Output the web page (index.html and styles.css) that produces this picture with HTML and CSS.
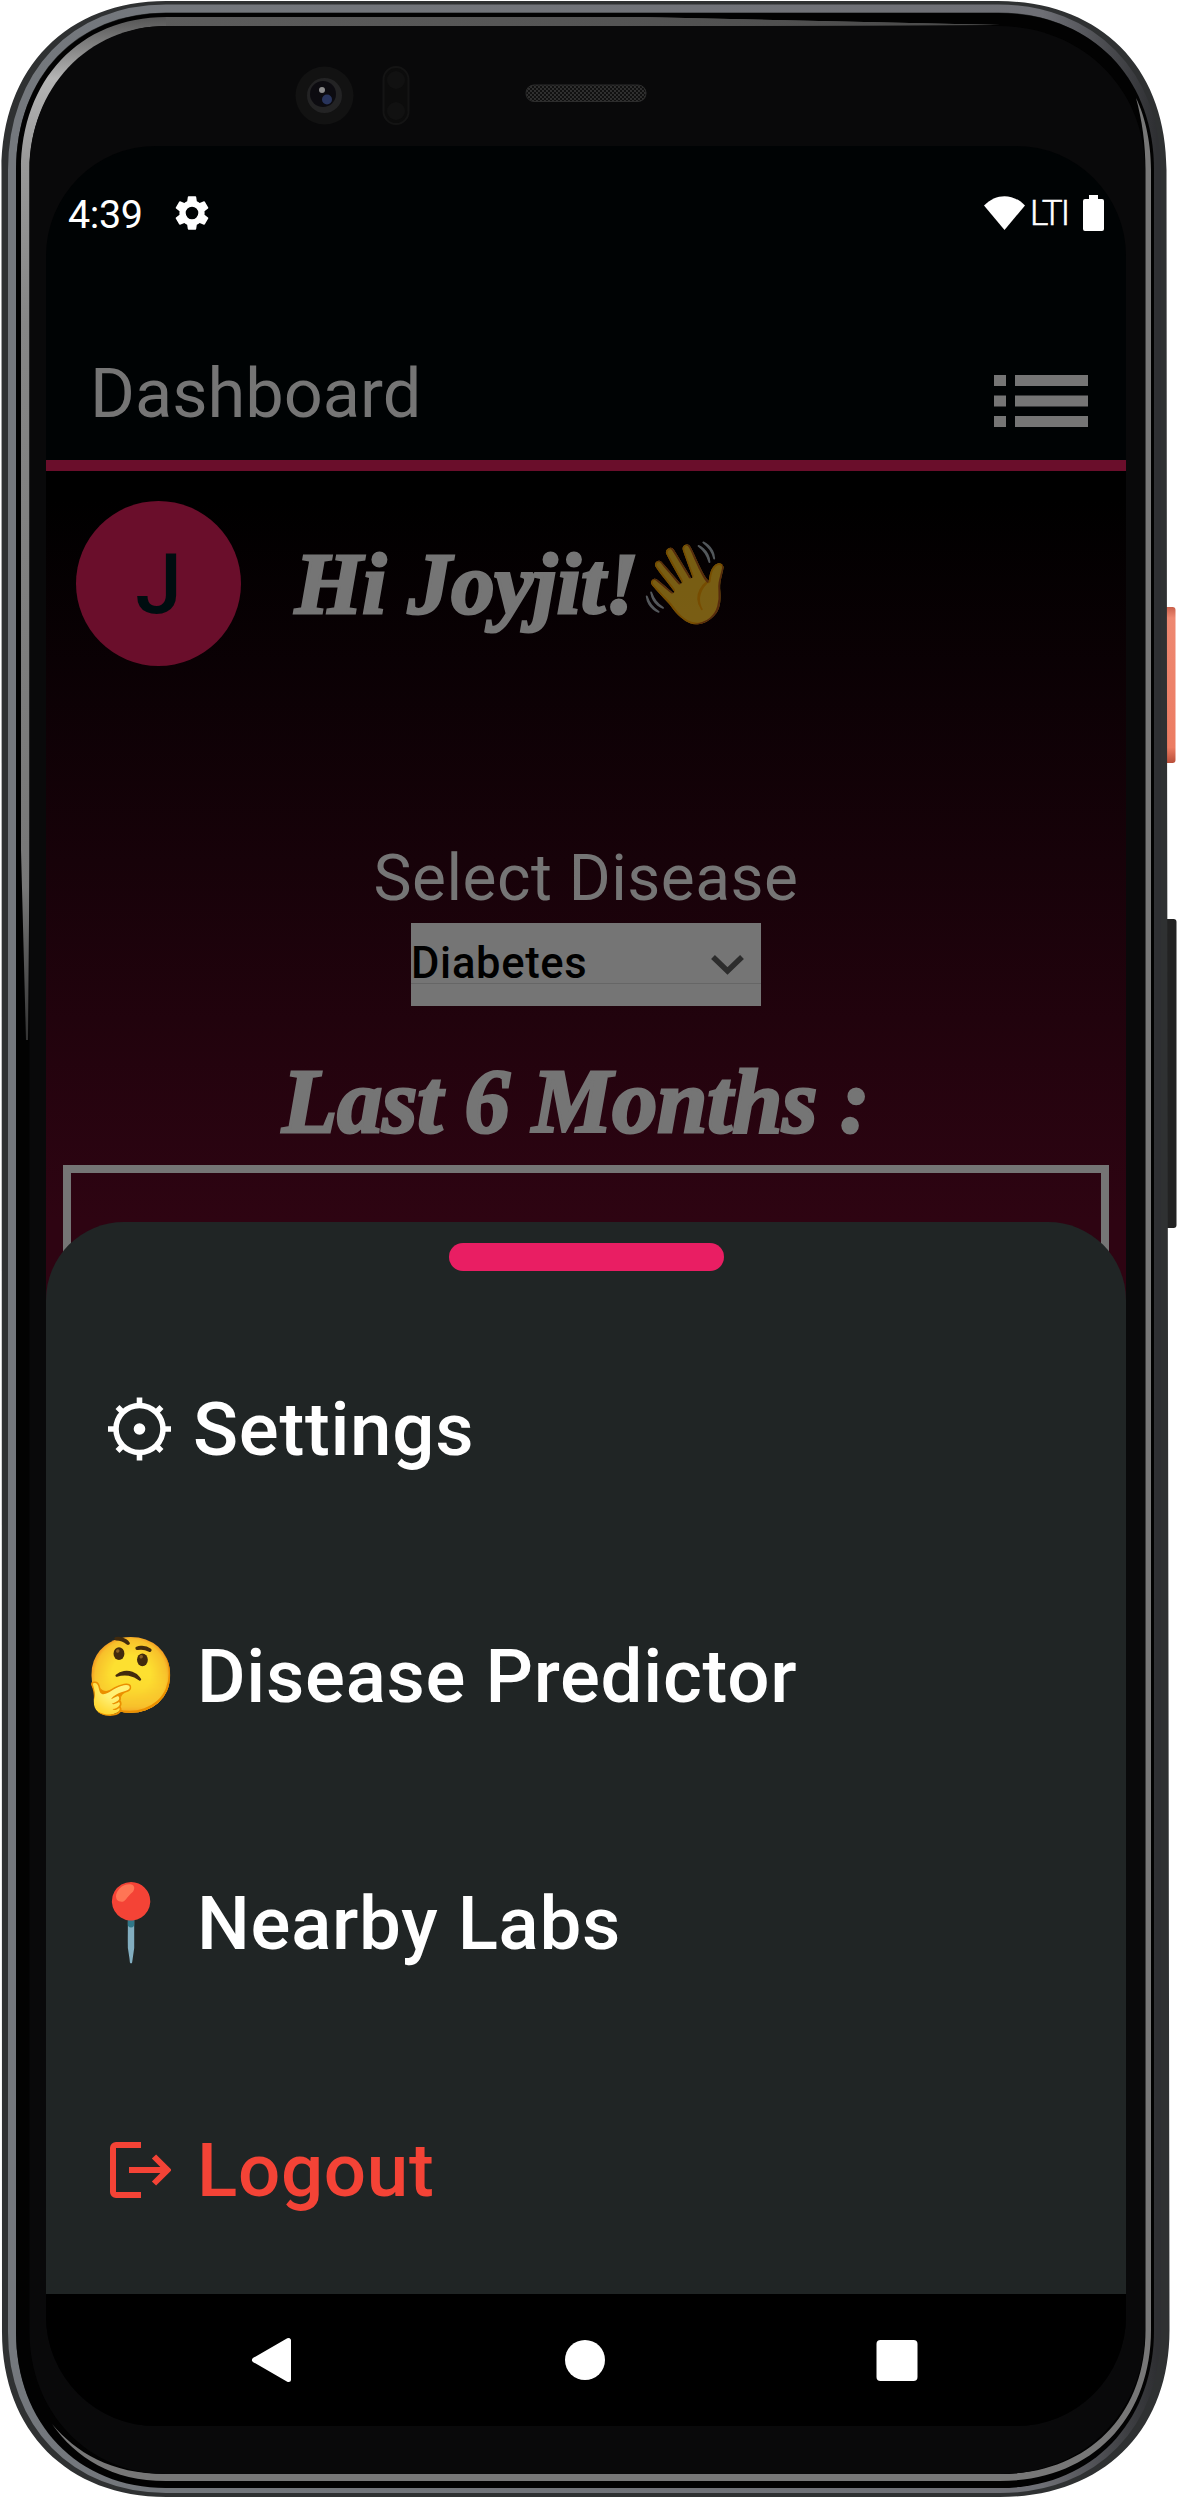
FILE: index.html
```html
<!DOCTYPE html>
<html lang="en">
<head>
<meta charset="utf-8">
<title>Dashboard</title>
<link rel="stylesheet" href="styles.css">
</head>
<body>
<div class="phone">
  <svg class="frame" viewBox="0 0 1178 2498" aria-hidden="true">
    <defs>
      <linearGradient id="rim" x1="0" y1="0" x2="1" y2="0">
        <stop offset="0" stop-color="#74787d"/><stop offset=".9" stop-color="#6e6f75"/><stop offset="1" stop-color="#2e2f32"/>
      </linearGradient>
      <linearGradient id="shineL" x1="0" y1="0" x2="0" y2="1">
        <stop offset="0" stop-color="#555"/><stop offset=".06" stop-color="#b4b4b4"/><stop offset=".14" stop-color="#999"/><stop offset=".3" stop-color="#868686"/><stop offset=".85" stop-color="#777"/><stop offset="1" stop-color="#333"/>
      </linearGradient>
      <linearGradient id="shineT" gradientUnits="userSpaceOnUse" x1="150" y1="0" x2="1000" y2="0">
        <stop offset="0" stop-color="#5c5c5c"/><stop offset=".55" stop-color="#545454"/><stop offset="1" stop-color="#4a4a4a"/>
      </linearGradient>
      <linearGradient id="power" x1="0" y1="0" x2="0" y2="1">
        <stop offset="0" stop-color="#c9604b"/><stop offset=".07" stop-color="#ee8871"/><stop offset=".9" stop-color="#ec7c62"/><stop offset="1" stop-color="#b94f3a"/>
      </linearGradient>
      <pattern id="mesh" width="4" height="4" patternUnits="userSpaceOnUse">
        <rect width="4" height="4" fill="#101010"/><circle cx="1" cy="1" r=".9" fill="#3d3d3d"/><circle cx="3" cy="3" r=".9" fill="#3d3d3d"/>
      </pattern>
    </defs>
    <rect x="1160" y="607" width="15.500" height="156" rx="3" fill="url(#power)"/>
    <rect x="1160" y="919" width="16.500" height="309" rx="3" fill="#222"/>
    <path d="M166 1H998C1100 1 1166.500 67 1166.500 170L1167 700L1169.500 2330C1169.500 2432 1102 2497 1000 2497H166C68 2497 2 2431 2 2332L1.500 170C1.500 67 68 1 166 1Z" fill="#2f3132"/>
    <path d="M166 8.500H998C1092 8.500 1157 74 1157 170V2330C1157 2424 1096 2489 1000 2489H166C74 2489 12 2424 12 2332V170C12 74 74 8.500 166 8.500Z" fill="none" stroke="url(#rim)" stroke-width="8"/>
    <path d="M166 13H998C1090 13 1154 76 1154 170V2330C1154 2422 1092 2488 1000 2488H166C78 2488 16 2424 16 2332V170C16 76 78 13 166 13Z" fill="#020202"/>
    <path d="M21 850V170C21 80 80 17 166 17H640L1000 25L640 26H166C92 26 29.500 88 29.500 170V860L28 1040L26 1040Z" fill="url(#shineL)"/>
    <path d="M166 17H640L1000 25L640 26H166Z" fill="url(#shineT)"/>
    <path d="M1145.500 170V2330C1145.500 2415 1088 2474 1000 2474H166C110 2474 76 2452 52 2424C76 2458 112 2481 166 2481H1000C1092 2481 1151 2418 1151 2330V170C1151 140 1144 114 1136 98C1142 120 1145.500 144 1145.500 170Z" fill="#777"/>
    <path d="M166 26H998C1082 26 1145 88 1145 170V2330C1145 2412 1084 2474 1000 2474H166C88 2474 29.500 2412 29.500 2332V170C29.500 88 88 26 166 26Z" fill="#09090a"/>
    <circle cx="324.500" cy="95.500" r="29" fill="#121212"/>
    <circle cx="324.500" cy="95.500" r="17.500" fill="#232324"/>
    <circle cx="323" cy="94" r="13" fill="#0c0b10"/>
    <circle cx="327" cy="99.500" r="5" fill="#28345c"/>
    <circle cx="322" cy="90" r="3" fill="#8c8c8c"/>
    <rect x="383.500" y="67" width="25" height="57" rx="12.500" fill="#0c0c0c" stroke="#141414" stroke-width="2"/>
    <circle cx="396" cy="80" r="9" fill="#111"/><circle cx="396" cy="111" r="9" fill="#111"/>
    <rect x="526" y="85" width="120" height="16.500" rx="8" fill="url(#mesh)" stroke="#2c2c2c"/>
  </svg>

  <div class="screen">
    <header class="status">
      <span class="clock">4:39</span>
      <svg class="gear" viewBox="0 0 24 24"><path fill="#fff" d="M19.140 12.940c.04-.3.06-.61.06-.94 0-.32-.02-.64-.07-.94l2.030-1.580a.49.49 0 0 0 .12-.61l-1.920-3.320a.49.49 0 0 0-.59-.22l-2.390.96a7 7 0 0 0-1.620-.94L14.400 2.810A.48.48 0 0 0 13.920 2.400h-3.840a.47.47 0 0 0-.47.41l-.36 2.540a7.400 7.400 0 0 0-1.620.94l-2.390-.96a.48.48 0 0 0-.59.22L2.740 8.870a.47.47 0 0 0 .12.61l2.030 1.580a6 6 0 0 0-.02 1.880l-2.030 1.580a.49.49 0 0 0-.12.61l1.920 3.320c.12.22.37.29.59.22l2.390-.96c.5.38 1.030.7 1.620.94l.36 2.540c.05.24.24.41.48.41h3.840c.24 0 .44-.17.47-.41l.36-2.540a7 7 0 0 0 1.620-.94l2.390.96c.22.08.47 0 .59-.22l1.920-3.320a.47.47 0 0 0-.12-.61zM12 15.600a3.600 3.600 0 1 1 0-7.200 3.600 3.600 0 0 1 0 7.200z"/></svg>
      <svg class="wifi" viewBox="0 0 41 34"><path fill="#fff" d="M20.500 34L0 9.500C12-3 29-3 41 9.500Z"/></svg>
      <span class="network">LTI</span>
      <svg class="battery" viewBox="0 0 21 36"><path fill="#fff" d="M6 0h9v4h4a2 2 0 0 1 2 2v28a2 2 0 0 1-2 2H2a2 2 0 0 1-2-2V6a2 2 0 0 1 2-2h4z"/></svg>
    </header>

    <div class="appbar">
      <h1 class="title">Dashboard</h1>
      <svg class="menu" viewBox="0 0 94 52"><path fill="#757575" d="M0 0h12v11H0zM21 0h73v11H21zM0 20.500h12v11H0zM21 20.500h73v11H21zM0 41h12v11H0zM21 41h73v11H21z"/></svg>
    </div>

    <main class="content">
      <div class="greeting">
        <div class="avatar">J</div>
        <div class="hello">Hi Joyjit!</div>
        <span class="wave">👋</span>
      </div>
      <div class="label">Select Disease</div>
      <div class="select">
        <span class="value">Diabetes</span>
        <svg class="chevron" viewBox="0 0 33 20"><path fill="none" stroke="#2c2c2c" stroke-width="5.500" d="M2 2l14.500 14L31 2"/></svg>
      </div>
      <h2 class="period">Last 6 Months :</h2>
      <div class="chart"></div>
    </main>

    <section class="sheet">
      <div class="handle"></div>
      <div class="item">
        <svg class="icon" viewBox="0 0 80 80"><g fill="none" stroke="#fff" stroke-width="5.600"><circle cx="48.500" cy="40" r="23.500"/><path d="M48.500 8.500v8M48.500 63.500v8M17 40h8M72 40h8M26.500 18l5.500 5.500M70.500 18L65 23.500M26.500 62l5.500-5.500M70.500 62L65 56.500"/></g><circle cx="48.500" cy="40" r="5.800" fill="#fff"/></svg>
        <span class="name first">Settings</span>
      </div>
      <div class="item"><span class="emoji">🤔</span><span class="name">Disease Predictor</span></div>
      <div class="item"><span class="emoji">📍</span><span class="name">Nearby Labs</span></div>
      <div class="item">
        <svg class="icon" viewBox="0 0 80 80"><path fill="none" stroke="#f44336" stroke-width="6" d="M50 15H25a3 3 0 0 0-3 3v44a3 3 0 0 0 3 3h25M38 40h38M63 26.500L76.500 40L63 53.500"/></svg>
        <span class="name logout">Logout</span>
      </div>
    </section>

    <nav class="nav">
      <svg viewBox="0 0 48 48"><path fill="#fff" stroke="#fff" stroke-width="5" stroke-linejoin="round" d="M5.500 24L39.500 4.500v39z"/></svg>
      <svg viewBox="0 0 48 48"><circle cx="24" cy="24" r="20" fill="#fff"/></svg>
      <svg viewBox="0 0 48 48"><rect x="3.500" y="4" width="41" height="41" rx="4" fill="#fff"/></svg>
    </nav>
  </div>
</div>
</body>
</html>
```

FILE: styles.css
```css
* { box-sizing: border-box; }
body { margin: 0; background: #fff; font-family: Roboto, "Liberation Sans", sans-serif; }
h1, h2 { margin: 0; font-weight: 400; }
svg { display: block; flex: none; }
.phone { position: relative; width: 1178px; height: 2498px; padding: 146px 52px 72px 46px; overflow: hidden; }
.frame { position: absolute; inset: 0; width: 1178px; height: 2498px; }
.screen { position: relative; width: 1080px; height: 2280px; border-radius: 110px; overflow: hidden; background: #000304; display: flex; flex-direction: column; white-space: nowrap; }

.status { height: 134px; display: flex; align-items: center; padding: 0 22px 0 22px; color: #fff; }
.clock { font-size: 39.500px; line-height: 46px; width: 103px; padding-top: 4px; letter-spacing: -.4px; }
.gear { width: 42px; height: 42px; }
.wifi { width: 41px; height: 34px; margin-left: auto; }
.network { font-size: 35px; font-weight: 300; line-height: 42px; width: 58px; padding: 2px 0 0 5px; letter-spacing: -2px; -webkit-text-stroke: .5px #fff; }
.battery { width: 21px; height: 36px; }

.appbar { height: 191px; border-bottom: 11px solid #6a0e2b; display: flex; justify-content: space-between; padding: 71px 38px 0 44px; }
.title { font-size: 68.500px; line-height: 80px; margin-top: 3px; color: #757575; }
.menu { width: 94px; height: 52px; margin-top: 24px; }

.content { flex: none; height: 841px; overflow: hidden; background: linear-gradient(#000 0, #000 30px, #2e0412 750px); display: flex; flex-direction: column; align-items: center; color: #757575; }
.content > * { flex: none; }
.greeting { align-self: stretch; display: flex; align-items: center; height: 165px; margin-top: 30px; padding-left: 30px; }
.avatar { width: 165px; height: 165px; border-radius: 50%; background: #6a0e2b; color: #000d10; font-size: 84px; font-weight: 500; line-height: 167px; text-align: center; }
.hello, .period { font-family: "Liberation Serif", serif; font-style: italic; font-weight: 700; -webkit-text-stroke: 3px #757575; }
.hello { width: 342px; margin-left: 54px; font-size: 86.500px; line-height: 100px; }
.wave { font-size: 80px; line-height: 100px; opacity: .46; font-family: "Noto Color Emoji", sans-serif; }
.label { font-size: 64px; line-height: 76px; margin-top: 175px; letter-spacing: .5px; }
.select { width: 350px; height: 83px; margin-top: 6px; background: linear-gradient(#666, #666) 0 60px / 100% 1px no-repeat #757575; display: flex; justify-content: space-between; padding: 13px 17px 0 0; }
.value { color: #000; font-size: 43.500px; font-weight: 500; line-height: 52px; margin-top: 2px; letter-spacing: .7px; }
.chevron { width: 33px; height: 20px; margin-top: 19px; }
.period { font-size: 90px; line-height: 100px; margin-top: 46px; padding-right: 20px; }
.chart { width: 1046px; height: 600px; margin-top: 13px; border: 8px solid #757575; }

.sheet { position: relative; flex: none; height: 1072px; margin-top: -90px; border-radius: 78px 78px 0 0; background: #202525; padding-top: 21px; display: flex; flex-direction: column; }
.handle { align-self: center; width: 275px; height: 28px; border-radius: 14px; background: #e91e63; margin-bottom: 34px; }
.item { height: 247.500px; display: flex; align-items: center; padding-left: 45px; }
.icon { width: 80px; height: 80px; }
.emoji { width: 86px; margin-left: -6px; font-size: 74px; line-height: 90px; font-family: "Noto Color Emoji", sans-serif; }
.name { margin: 2px 0 0 26px; font-size: 74.500px; font-weight: 500; line-height: 90px; letter-spacing: .7px; color: #fff; }
.name.first { margin-left: 22px; }
.name.logout { color: #f44336; }

.nav { flex: none; height: 132px; background: #000; display: flex; justify-content: space-between; padding: 42px 205px 0 203px; }
.nav svg { width: 48px; height: 48px; }
```
